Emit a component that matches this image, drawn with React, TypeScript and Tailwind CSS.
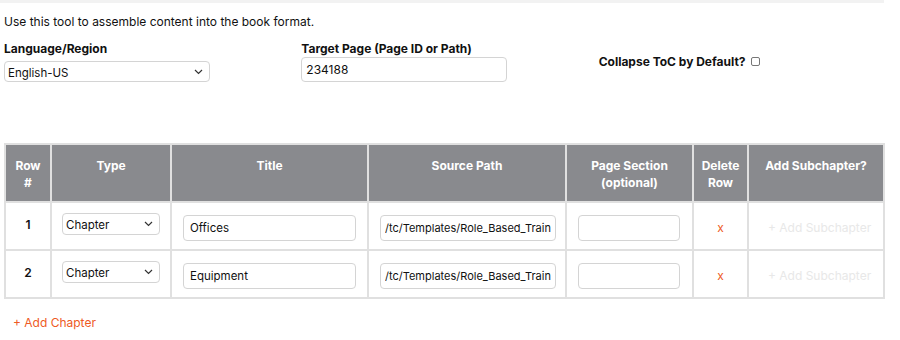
import React from 'react';

type Row = {
  id: number;
  type: string;
  title: string;
  source: string;
};

const rows: Row[] = [
  { id: 1, type: 'Chapter', title: 'Offices', source: '/tc/Templates/Role_Based_Training/Offices' },
  { id: 2, type: 'Chapter', title: 'Equipment', source: '/tc/Templates/Role_Based_Training/Equipment' },
];

const headers: { label: React.ReactNode; width: string }[] = [
  { label: <>Row<br />#</>, width: 'w-[46px]' },
  { label: 'Type', width: 'w-[120px]' },
  { label: 'Title', width: 'w-[197px]' },
  { label: 'Source Path', width: 'w-[198px]' },
  { label: <>Page Section<br />(optional)</>, width: 'w-[127px]' },
  { label: <>Delete<br />Row</>, width: 'w-[55px]' },
  { label: 'Add Subchapter?', width: 'w-[136px]' },
];

function Chevron() {
  return (
    <svg width="9" height="6" viewBox="0 0 9 6" fill="none" className="absolute right-[6px] top-1/2 -translate-y-1/2">
      <path d="M1 1l3.5 3.5L8 1" stroke="#333" strokeWidth="1.2" />
    </svg>
  );
}

function FakeSelect({ value, className }: { value: string; className: string }) {
  return (
    <div className={`relative flex items-center border border-[#d4d4d4] rounded-[4px] bg-white px-[3px] text-[11.5px] leading-[14px] text-[#111] ${className}`}>
      <span className="translate-y-[1px]">{value}</span>
      <Chevron />
    </div>
  );
}

export default function App() {
  return (
    <div className="w-[900px] h-[340px] bg-white text-[#111] overflow-hidden" style={{ fontFamily: 'Inter, "Noto Sans", sans-serif' }}>
      <div className="h-[3px] w-[884px] bg-[#f2f2f2]" />
      <p className="px-[4px] mt-[12px] text-[12px] leading-[14px]">Use this tool to assemble content into the book format.</p>

      <div className="grid grid-cols-3 items-center px-[4px] mt-[12px]">
        <div className="flex flex-col">
          <label className="text-[12px] font-bold leading-[15px]">Language/Region</label>
          <FakeSelect value="English-US" className="mt-[5px] w-[206px] h-[21px]" />
        </div>
        <div className="flex flex-col">
          <label className="text-[12px] font-bold leading-[15px]">Target Page (Page ID or Path)</label>
          <input
            className="mt-[1px] w-[206px] h-[25px] border border-[#d4d4d4] rounded-[4px] px-[4px] text-[12px] outline-none"
            defaultValue="234188"
            type="text"
          />
        </div>
        <div className="flex items-center gap-[5px]">
          <span className="text-[12px] font-bold">Collapse ToC by Default?</span>
          <span className="w-[9px] h-[9px] border border-[#777] rounded-[2px] bg-white" />
        </div>
      </div>

      <table className="ml-[4px] mt-[61px] border-collapse border-2 border-[#e0e0e0] table-fixed w-[881px]">
        <thead>
          <tr className="bg-[#898a8e] text-white">
            {headers.map((h, i) => (
              <th
                key={i}
                className={`${h.width} h-[58px] border-2 border-[#e0e0e0] align-top pt-[12px] text-[12px] font-bold leading-[17px]`}
              >
                {h.label}
              </th>
            ))}
          </tr>
        </thead>
        <tbody>
          {rows.map((row) => (
            <tr key={row.id} className="h-[48px]">
              <td className="border-2 border-[#e0e0e0] align-top pt-[13px] text-center text-[12px] font-semibold">{row.id}</td>
              <td className="border-2 border-[#e0e0e0] align-top pt-[10px] px-[10px]">
                <FakeSelect value={row.type} className="w-[98px] h-[22px]" />
              </td>
              <td className="border-2 border-[#e0e0e0] align-top pt-[11px] px-[11px]">
                <input
                  className="w-[173px] h-[26px] border border-[#d4d4d4] rounded-[4px] px-[6px] text-[11.5px] outline-none"
                  defaultValue={row.title}
                  type="text"
                />
              </td>
              <td className="border-2 border-[#e0e0e0] align-top pt-[11px] px-[11px]">
                <input
                  className="w-[176px] h-[26px] border border-[#d4d4d4] rounded-[4px] px-[4px] text-[11px] outline-none"
                  defaultValue={row.source}
                  type="text"
                />
              </td>
              <td className="border-2 border-[#e0e0e0] align-top pt-[11px] px-[11px]">
                <input
                  className="w-[102px] h-[26px] border border-[#d4d4d4] rounded-[4px] px-[4px] text-[12px] outline-none"
                  type="text"
                />
              </td>
              <td className="border-2 border-[#e0e0e0] align-top pt-[16px] text-center text-[12px] text-[#ee5a24]">x</td>
              <td className="border-2 border-[#e0e0e0] align-top pt-[16px] pl-[19px] text-[12px] text-[#e8e8e8]">+ Add Subchapter</td>
            </tr>
          ))}
        </tbody>
      </table>

      <button className="ml-[13px] mt-[15px] text-[12px] text-[#ee5a24]" type="button">
        + Add Chapter
      </button>
    </div>
  );
}
